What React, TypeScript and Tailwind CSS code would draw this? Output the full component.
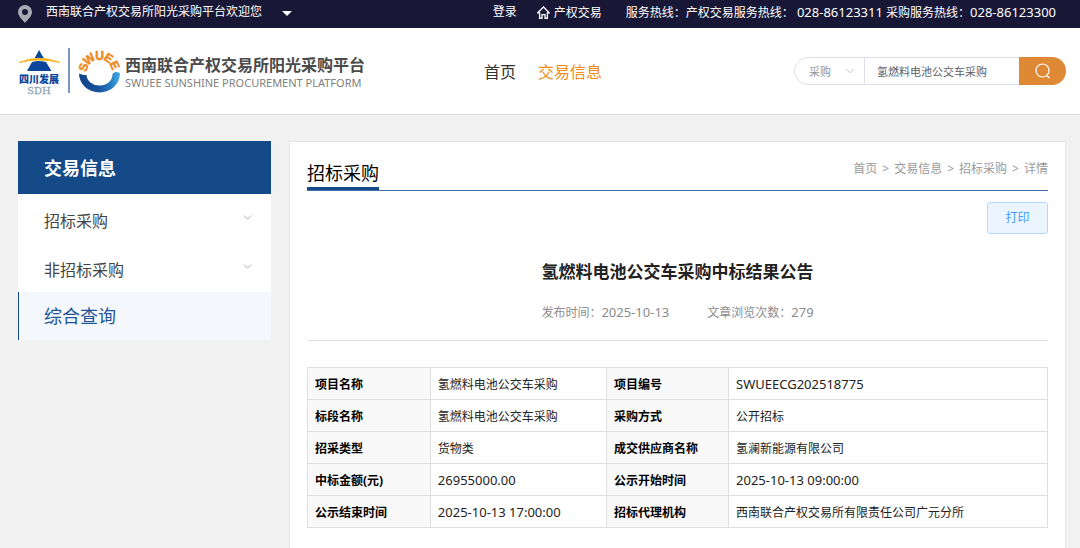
import { useState } from 'react';
import { ChevronDown } from 'lucide-react';

const details = [
  ['项目名称', '氢燃料电池公交车采购', '项目编号', 'SWUEECG202518775'],
  ['标段名称', '氢燃料电池公交车采购', '采购方式', '公开招标'],
  ['招采类型', '货物类', '成交供应商名称', '氢澜新能源有限公司'],
  ['中标金额(元)', '26955000.00', '公示开始时间', '2025-10-13 09:00:00'],
  ['公示结束时间', '2025-10-13 17:00:00', '招标代理机构', '西南联合产权交易所有限责任公司广元分所'],
];

const crumbs = ['首页', '交易信息', '招标采购', '详情'];

const isLatin = (text: string) => /^[\x20-\x7e]+$/.test(text);

// letters on the upper half of the ring: [letter, angle]
const ringLetters: [string, number][] = [
  ['S', -73],
  ['W', -38],
  ['U', 0],
  ['E', 33],
  ['E', 66],
];

const Logo = () => (
  <svg width="104" height="50" viewBox="0 0 104 50" className="overflow-visible" aria-hidden="true">
    <defs>
      <linearGradient id="ring" x1="0" y1="0" x2="1" y2="0">
        <stop offset="0" stopColor="#0f4488" />
        <stop offset="0.45" stopColor="#15529b" />
        <stop offset="0.75" stopColor="#2277bd" />
        <stop offset="1" stopColor="#45aee6" />
      </linearGradient>
    </defs>
    <path d="M21 4l5 8.500q-5-1.200-9.500 0z" fill="#0a459c" />
    <path d="M14 16q7-2 14 0l5.500 9H9z" fill="#0a459c" />
    <path d="M1 16.500Q21 8 42 16.500Q21 11.500 1 16.500z" fill="#f9b219" stroke="#f9b219" strokeWidth="0.8" />
    <text x="21" y="37" textAnchor="middle" fontSize="10" fontWeight="900" fill="#0a459c" className="font-['Noto_Sans_CJK_SC',sans-serif]">
      四川发展
    </text>
    <text x="21" y="48" textAnchor="middle" fontSize="10" fill="#8fa9b9" stroke="#8fa9b9" strokeWidth="0.3" className="font-['DejaVu_Serif',serif]">
      SDH
    </text>
    <path d="M51 2v45" stroke="#4a77ad" strokeWidth="1.500" />
    <path d="M61 27.500A20.500 19 0 0 0 102 27.500Q97.500 24.500 94.500 28A13 11 0 0 1 68.500 29Q65.500 29.500 61 27.500z" fill="url(#ring)" />
    {ringLetters.map(([letter, angle], i) => (
      <text
        key={i}
        x="81.500"
        y="13.500"
        transform={`rotate(${angle} 81.500 26)`}
        textAnchor="middle"
        fontSize="12"
        fontWeight="700"
        fill="#ee8a22"
        stroke="#ee8a22"
        strokeWidth="0.5"
        className="font-['Liberation_Sans',sans-serif]"
      >
        {letter}
      </text>
    ))}
  </svg>
);

const TopBar = () => (
  <div className="flex h-7 items-start justify-between bg-[#181736] pl-[18px] pr-6 text-xs leading-6 text-white">
    <button className="flex items-center">
      <svg width="14" height="18" viewBox="0 0 14 18" className="mt-1" aria-hidden="true">
        <path fillRule="evenodd" d="M7 0a7 7 0 0 1 7 7c0 4-4.500 8-7 11C4.500 15 0 11 0 7a7 7 0 0 1 7-7zm0 4a3 3 0 1 0 0 6 3 3 0 0 0 0-6z" fill="#a9a9b4" />
      </svg>
      <span className="ml-3.5">西南联合产权交易所阳光采购平台欢迎您</span>
      <svg width="10" height="5" viewBox="0 0 10 5" className="ml-5 mt-0.5" aria-hidden="true">
        <path d="M0 0h10L5 5z" fill="#fff" />
      </svg>
    </button>
    <div className="flex whitespace-nowrap">
      <a href="#" className="mr-5">登录</a>
      <a href="#" className="mr-6 flex items-center gap-1">
        <svg width="13" height="13" viewBox="0 0 12 12" fill="none" stroke="#fff" strokeWidth="1.200" aria-hidden="true">
          <path d="M.7 6.300L6 .9l5.300 5.400H9.600v5H7.400V8H4.600v3.300H2.400v-5z" />
        </svg>
        产权交易
      </a>
      <p>
        服务热线：产权交易服务热线： <span className="text-[13px]">028-86123311</span> 采购服务热线：
        <span className="text-[13px]">028-86123300</span>
      </p>
    </div>
  </div>
);

const SearchBox = () => {
  const [keyword, setKeyword] = useState('氢燃料电池公交车采购');

  return (
    <form className="flex h-7 w-[272px] overflow-hidden rounded-full text-[11px]" onSubmit={(e) => e.preventDefault()}>
      <div className="relative w-[71px] shrink-0">
        <select
          aria-label="类型"
          className="h-full w-full appearance-none rounded-l-full border border-[#dcdfe6] bg-white pl-3.5 pt-0.5 text-[#909399] outline-none"
        >
          <option>采购</option>
        </select>
        <ChevronDown size={14} strokeWidth={1.5} className="pointer-events-none absolute right-2 top-[7px] text-[#b4b8c0]" />
      </div>
      <input
        type="text"
        aria-label="关键字"
        value={keyword}
        onChange={(e) => setKeyword(e.target.value)}
        className="min-w-0 flex-1 border-y border-[#dcdfe6] bg-white px-3 pt-0.5 text-[#606266] outline-none"
      />
      <button type="submit" aria-label="搜索" className="flex w-[47px] items-center justify-center bg-[#e08934]">
        <svg width="16" height="16" viewBox="0 0 16 16" fill="none" stroke="#fff" strokeWidth="1.200" aria-hidden="true">
          <circle cx="7.500" cy="7.500" r="6.500" />
          <path d="M11.500 12.500l3 2.500" />
        </svg>
      </button>
    </form>
  );
};

const Header = () => (
  <header className="flex h-[87px] items-center border-b border-[#dcdcdc] bg-white pl-[18px] pr-3.5">
    <a href="#" className="flex items-center gap-[3px]">
      <Logo />
      <div className="w-60 whitespace-nowrap pt-1">
        <div className="text-base font-bold leading-5 text-[#4a4a4a]">西南联合产权交易所阳光采购平台</div>
        <div className="text-[11px] leading-4 text-[#808080]">SWUEE SUNSHINE PROCUREMENT PLATFORM</div>
      </div>
    </a>
    <nav className="ml-[119px] flex flex-1 gap-[22px] whitespace-nowrap pt-0.5 text-base leading-6 text-[#333]">
      <a href="#">首页</a>
      <a href="#" className="text-[#f08c1a]">交易信息</a>
    </nav>
    <SearchBox />
  </header>
);

const Sidebar = () => (
  <aside className="w-[253px] shrink-0">
    <h2 className="bg-[#154a88] px-[26px] pt-px text-lg font-bold leading-[52px] text-white">交易信息</h2>
    {['招标采购', '非招标采购'].map((name) => (
      <button key={name} className="flex h-[49px] w-full justify-between bg-white pl-[26px] pr-[17px] pt-[15px] text-base leading-6 text-[#444]">
        {name}
        <ChevronDown size={13} strokeWidth={1.5} className="mt-0.5 text-[#999]" />
      </button>
    ))}
    <a href="#" className="block border-l border-[#154a88] bg-[#f4f8fd] pl-[25px] text-lg leading-[48px] text-[#1f5596]">
      综合查询
    </a>
  </aside>
);

const DetailTable = () => (
  <table className="mt-[26px] w-full table-fixed border-collapse text-xs text-[#222]">
    <colgroup>
      <col className="w-[16.6%]" />
      <col className="w-[23.8%]" />
      <col className="w-[16.5%]" />
      <col />
    </colgroup>
    <tbody>
      {details.map((row) => (
        <tr key={row[0]} className="h-8">
          {row.map((cell, i) =>
            i % 2 === 0 ? (
              <th key={i} scope="row" className="border border-[#dfdfdf] bg-[#f9f9f9] px-[7px] pt-0.5 text-left font-bold leading-5 text-black">
                {cell}
              </th>
            ) : (
              <td key={i} className={`border border-[#dfdfdf] px-[7px] leading-5 ${isLatin(cell) ? 'text-[13px]' : 'pt-0.5'}`}>
                {cell}
              </td>
            ),
          )}
        </tr>
      ))}
    </tbody>
  </table>
);

export default function App() {
  return (
    <div className="flex min-h-screen flex-col bg-[#f1f1f1] font-['Noto_Sans','Noto_Sans_CJK_SC',sans-serif]">
      <TopBar />
      <Header />
      <div className="flex flex-1 gap-[18px] pl-[18px] pr-3.5 pt-[26px]">
        <Sidebar />
        <main className="min-w-0 flex-1 border border-b-0 border-[#e6e6e6] bg-white px-[17px] pb-[19px]">
          <div className="flex h-[49px] items-end justify-between border-b border-[#3f6ea6]">
            <h1 className="border-b-[3px] border-[#154a88] pb-0.5 text-lg leading-6 text-black">招标采购</h1>
            <nav aria-label="面包屑" className="flex gap-[5px] pb-[9px] text-xs leading-6 text-[#999]">
              {crumbs.map((name, i) => (
                <span key={name} className="flex gap-[5px]">
                  {i > 0 && <span>&gt;</span>}
                  <a href="#">{name}</a>
                </span>
              ))}
            </nav>
          </div>
          <div className="mt-[11px] flex justify-end">
            <button className="h-8 w-[61px] rounded-[3px] border border-[#b3d8ff] bg-[#ecf5ff] text-xs text-[#409eff]">打印</button>
          </div>
          <h2 className="mt-[26px] text-center text-[17px] font-bold leading-6 text-[#222]">氢燃料电池公交车采购中标结果公告</h2>
          <div className="mt-4 flex justify-center gap-[38px] border-b border-[#dfdfdf] pb-[15px] text-xs leading-6 text-[#8c8c8c]">
            <span>发布时间：<span className="text-[13px]">2025-10-13</span></span>
            <span>文章浏览次数：<span className="text-[13px]">279</span></span>
          </div>
          <DetailTable />
        </main>
      </div>
    </div>
  );
}
